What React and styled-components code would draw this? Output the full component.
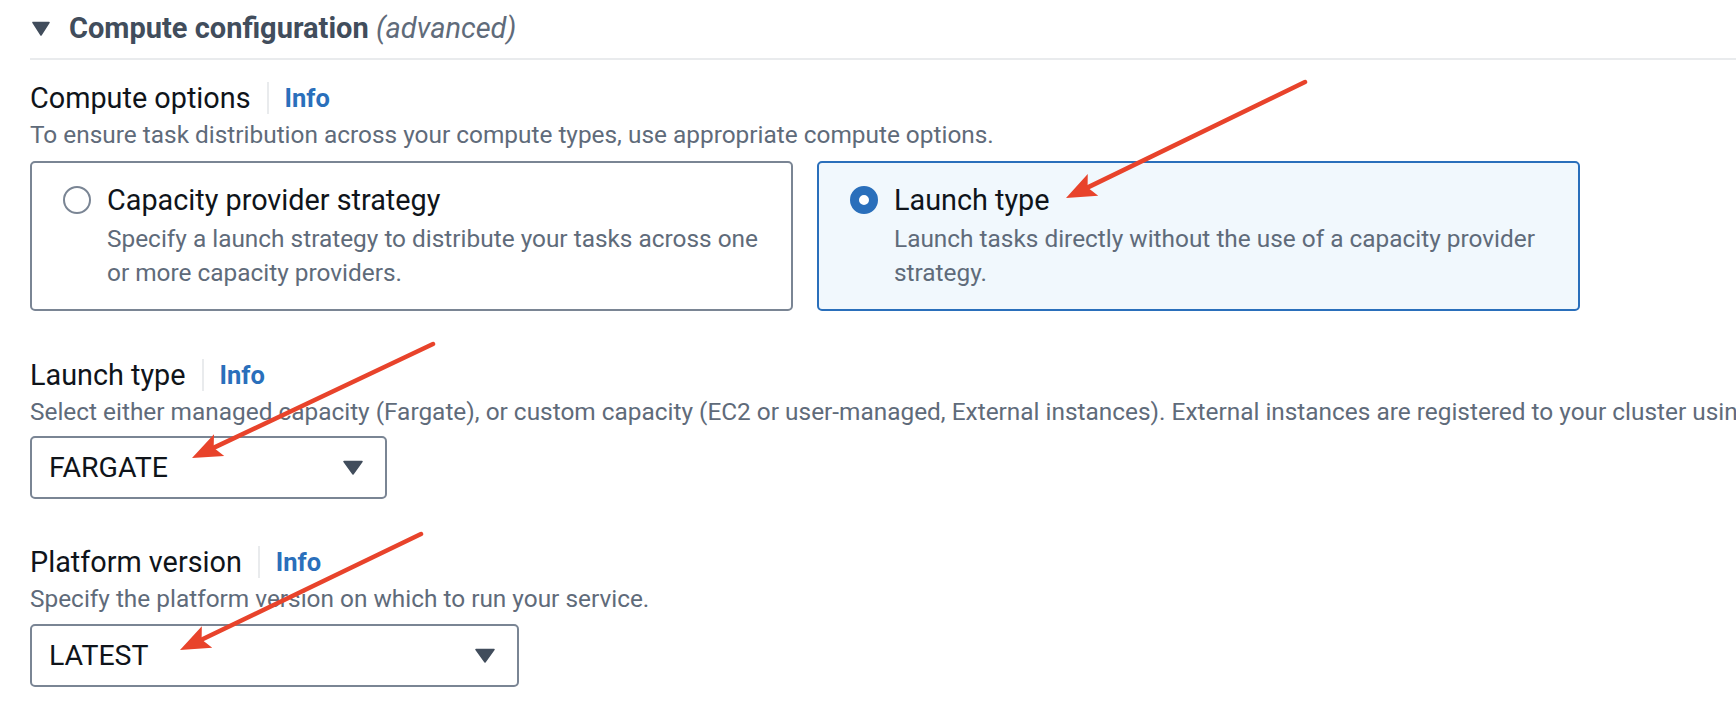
import React from "react";
import styled, { createGlobalStyle } from "styled-components";

const BLUE = "#2a6fbb";

const GlobalStyle = createGlobalStyle`
  html, body { margin: 0; padding: 0; background: #ffffff; overflow: hidden; }
  body { font-family: Roboto, "Noto Sans", "Liberation Sans", sans-serif; }
  * { box-sizing: border-box; }
`;

const Page = styled.div`
  position: relative;
  width: 1736px;
  height: 716px;
  overflow: hidden;
  padding: 8px 0 0 30px;
`;

const Header = styled.div`
  display: flex;
  align-items: center;
  gap: 19px;
  height: 40px;
  padding-left: 2px;
`;

const HeadingText = styled.h2`
  margin: 0;
  font-size: 29px;
  line-height: 40px;
  font-weight: 700;
  color: #414d5c;
  white-space: nowrap;
`;

const Advanced = styled.span`
  font-style: italic;
  font-weight: 400;
  color: #5f6b7a;
`;

const Separator = styled.div`
  height: 2px;
  margin-top: 10px;
  background: #e9ebed;
`;

const Field = styled.div`
  margin-top: ${(p) => p.$top}px;
`;

const LabelRow = styled.div`
  display: flex;
  align-items: center;
  height: 40px;
  font-size: 28.8px;
  color: #0f141a;
  white-space: nowrap;
`;

const LabelDivider = styled.span`
  width: 2px;
  height: 32px;
  background: #e9ebed;
  margin: 0 16px;
`;

const InfoLink = styled.a`
  font-size: 25.5px;
  font-weight: 700;
  color: ${BLUE};
  text-decoration: none;
`;

const Description = styled.div`
  font-size: 24.4px;
  line-height: 34px;
  color: #5f6b7a;
  white-space: nowrap;
`;

const Tiles = styled.div`
  display: grid;
  grid-template-columns: 763px 763px;
  gap: 24px;
  margin-top: 9px;
`;

const Tile = styled.div`
  display: flex;
  align-items: flex-start;
  gap: 16px;
  height: 150px;
  padding: 15px 20px 0 31px;
  border: 2px solid ${(p) => (p.$selected ? BLUE : "#7a8594")};
  border-radius: 5px;
  background: ${(p) => (p.$selected ? "#f1f8fd" : "#ffffff")};
`;

const Radio = styled.span`
  flex: none;
  width: 28px;
  height: 28px;
  margin-top: 8px;
  border-radius: 50%;
  background: #ffffff;
  border: ${(p) => (p.$checked ? `9px solid ${BLUE}` : "2px solid #7a8594")};
`;

const TileBody = styled.div`
  display: flex;
  flex-direction: column;
`;

const TileTitle = styled.div`
  font-size: 28.8px;
  line-height: 44px;
  color: #0f141a;
  white-space: nowrap;
`;

const TileDesc = styled.div`
  font-size: 24.4px;
  line-height: 34px;
  color: #5f6b7a;
  white-space: nowrap;
`;

const Select = styled.div`
  display: flex;
  align-items: center;
  justify-content: space-between;
  width: ${(p) => p.$width}px;
  height: 63px;
  margin-top: ${(p) => p.$top}px;
  padding: 0 22px 0 17px;
  border: 2px solid #7a8594;
  border-radius: 5px;
  font-size: 28.5px;
  color: #0f141a;
`;

const Overlay = styled.svg`
  position: absolute;
  top: 0;
  left: 0;
  pointer-events: none;
`;

const Caret = () => (
  <svg width="20" height="15" viewBox="0 0 20 15">
    <path d="M1 1.5 H19 L10 14 Z" fill="#414d5c" stroke="#414d5c" strokeWidth="1.5" strokeLinejoin="round" />
  </svg>
);

const ExpandTriangle = () => (
  <svg width="18" height="15" viewBox="0 0 18 15">
    <path d="M1 1.5 H17 L9 14 Z" fill="#414d5c" stroke="#414d5c" strokeWidth="1.5" strokeLinejoin="round" />
  </svg>
);

const Arrow = ({ x1, y1, x2, y2 }) => {
  const dx = x2 - x1;
  const dy = y2 - y1;
  const len = Math.hypot(dx, dy);
  const ux = dx / len;
  const uy = dy / len;
  const head = 30;
  const half = 12;
  const bx = x2 - ux * head;
  const by = y2 - uy * head;
  const nx = -uy;
  const ny = ux;
  const pts = `${x2},${y2} ${bx + nx * half},${by + ny * half} ${bx + ux * 6},${by + uy * 6} ${bx - nx * half},${by - ny * half}`;
  return (
    <g>
      <line x1={x1} y1={y1} x2={bx + ux * 8} y2={by + uy * 8} stroke="#e8432b" strokeWidth="4.5" strokeLinecap="round" />
      <polygon points={pts} fill="#e8432b" />
    </g>
  );
};

const FieldLabel = ({ children }) => (
  <LabelRow>
    {children}
    <LabelDivider />
    <InfoLink href="#">Info</InfoLink>
  </LabelRow>
);

export default function App() {
  return (
    <>
      <GlobalStyle />
      <Page>
        <Header>
          <ExpandTriangle />
          <HeadingText>
            Compute configuration <Advanced>(advanced)</Advanced>
          </HeadingText>
        </Header>
        <Separator />

        <Field $top={18}>
          <FieldLabel>Compute options</FieldLabel>
          <Description>To ensure task distribution across your compute types, use appropriate compute options.</Description>
          <Tiles>
            <Tile>
              <Radio />
              <TileBody>
                <TileTitle>Capacity provider strategy</TileTitle>
                <TileDesc>Specify a launch strategy to distribute your tasks across one</TileDesc>
                <TileDesc>or more capacity providers.</TileDesc>
              </TileBody>
            </Tile>
            <Tile $selected>
              <Radio $checked />
              <TileBody>
                <TileTitle>Launch type</TileTitle>
                <TileDesc>Launch tasks directly without the use of a capacity provider</TileDesc>
                <TileDesc>strategy.</TileDesc>
              </TileBody>
            </Tile>
          </Tiles>
        </Field>

        <Field $top={44}>
          <FieldLabel>Launch type</FieldLabel>
          <Description>
            Select either managed capacity (Fargate), or custom capacity (EC2 or user-managed, External instances). External instances are registered to your cluster using the ECS Anywhere registration process.
          </Description>
          <Select $width={357} $top={7}>
            <span>FARGATE</span>
            <Caret />
          </Select>
        </Field>

        <Field $top={43}>
          <FieldLabel>Platform version</FieldLabel>
          <Description>Specify the platform version on which to run your service.</Description>
          <Select $width={489} $top={8}>
            <span>LATEST</span>
            <Caret />
          </Select>
        </Field>

        <Overlay width="1736" height="716" viewBox="0 0 1736 716">
          <Arrow x1={1305} y1={82} x2={1066} y2={198} />
          <Arrow x1={433} y1={344} x2={192} y2={458} />
          <Arrow x1={421} y1={534} x2={180} y2={650} />
        </Overlay>
      </Page>
    </>
  );
}
